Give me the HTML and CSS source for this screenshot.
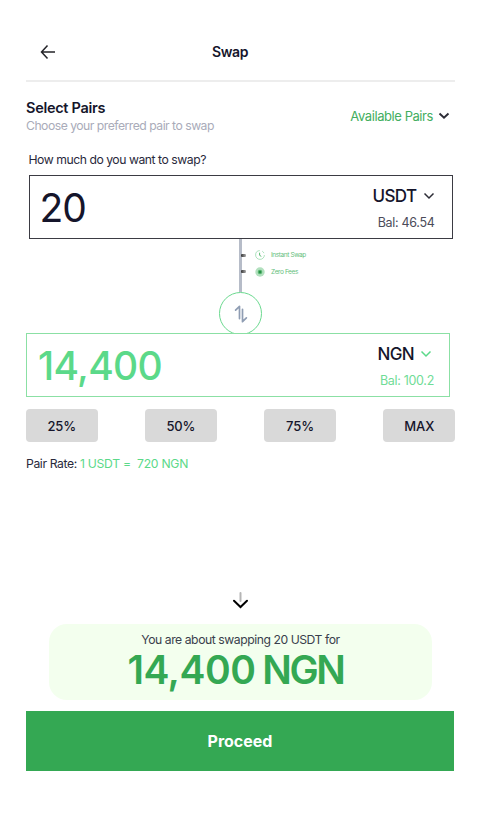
FILE: index.html
```html
<!DOCTYPE html>
<html lang="en">
<head>
<meta charset="utf-8">
<title>Swap</title>
<link rel="stylesheet" href="styles.css">
</head>
<body>
<main class="screen">
  <header class="header">
    <svg class="back" width="16" height="16" viewBox="0 0 16 16"><path d="M15 8H1.500M7.500 1.500L1.500 8l6 6.500"/></svg>
    <h1 class="title">Swap</h1>
  </header>

  <section class="pairs">
    <div>
      <h2 class="pairs-title">Select Pairs</h2>
      <p class="pairs-sub">Choose your preferred pair to swap</p>
    </div>
    <div class="available"><span class="available-text">Available Pairs</span>
      <svg class="chevron bold" width="12" height="8" viewBox="0 0 12 8"><path d="M1.500 1.500L6 5.800l4.500-4.300"/></svg>
    </div>
  </section>

  <p class="question">How much do you want to swap?</p>

  <section class="box from">
    <span class="amount">20</span>
    <div class="side">
      <div class="currency"><span class="code">USDT</span><svg class="chevron" width="12" height="8" viewBox="0 0 12 8"><path d="M1.500 1.500L6 6l4.500-4.500"/></svg></div>
      <span class="balance">Bal: 46.54</span>
    </div>
  </section>

  <section class="link">
    <div class="rail"></div>
    <ul class="perks">
      <li class="perk"><i class="tick"></i>
        <svg class="perk-icon" width="10" height="10" viewBox="0 0 10 10"><circle cx="5" cy="5" r="4.400" fill="none" stroke="#9bdcae" stroke-width=".8" stroke-dasharray="20 2.500 2.500 2.600"/><path d="M4.600 2.700V5.300L6.300 6.400" fill="none" stroke="#34a853" stroke-width=".8"/></svg>
        <span>Instant Swap</span></li>
      <li class="perk"><i class="tick"></i>
        <svg class="perk-icon" width="10" height="10" viewBox="0 0 10 10"><circle cx="5" cy="5" r="4.700" fill="#b2e0be"/><circle cx="5" cy="5" r="2.300" fill="#5dba75"/><path d="M5 3.500L6.500 5 5 6.500 3.500 5Z" fill="#238943"/></svg>
        <span>Zero Fees</span></li>
    </ul>
    <div class="swap">
      <svg width="14" height="18" viewBox="0 0 14 18"><path d="M1.600 5.200L5.500 1.300V13.600M8.500 4.300v12.400l3.900-3.900"/></svg>
    </div>
  </section>

  <section class="box to">
    <span class="amount">14,400</span>
    <div class="side">
      <div class="currency"><span class="code ngn">NGN</span><svg class="chevron" width="12" height="8" viewBox="0 0 12 8"><path d="M1.500 1.500L6 6l4.500-4.500"/></svg></div>
      <span class="balance">Bal: 100.2</span>
    </div>
  </section>

  <div class="percents">
    <button class="percent">25%</button>
    <button class="percent">50%</button>
    <button class="percent">75%</button>
    <button class="percent">MAX</button>
  </div>

  <p class="rate">Pair Rate: <span class="rate-value">1 USDT =&nbsp; 720 NGN</span></p>

  <svg class="down" width="17" height="19" viewBox="0 0 17 19"><path d="M8.500 2v8" stroke="#b5b5b5" stroke-width="2"/><path d="M2 9.800L8.500 16l6.500-6.200" stroke="#000" stroke-width="2"/></svg>

  <section class="summary">
    <p class="summary-text">You are about swapping 20 USDT for</p>
    <p class="summary-amount">14,400 <span class="unit">NGN</span></p>
  </section>

  <button class="proceed">Proceed</button>
</main>
</body>
</html>
```
FILE: styles.css
```css
* { box-sizing: border-box; }
body { margin: 0; background: #fff; color: #15152b; font-family: Inter, "Liberation Sans", sans-serif; }
h1, h2, p, ul { margin: 0; padding: 0; }
button { border: 0; padding: 0; font-family: inherit; color: inherit; }
svg { display: block; flex: none; }
.screen { width: 481px; height: 837px; padding: 24px 26px 0; overflow: hidden; display: flex; flex-direction: column; }
.header { height: 58px; flex: none; width: 429px; border-bottom: 2px solid #ededed; display: grid; grid-template-columns: 186px 57px 186px; align-items: center; }
.back { margin-left: 14px; fill: none; stroke: #242429; stroke-width: 1.5; }
.title { font-size: 14px; font-weight: 600; letter-spacing: -.4px; padding-bottom: 1px; }
.pairs { width: 429px; height: 54px; margin-top: 16px; flex: none; display: flex; justify-content: space-between; }
.pairs-title { font-size: 14.5px; font-weight: 600; line-height: 20px; letter-spacing: -.3px; }
.pairs-sub { font-size: 12.2px; line-height: 15px; color: #a9abb9; letter-spacing: -.5px; }
.available { display: flex; align-items: center; gap: 5px; height: 36px; padding-right: 5px; }
.available-text { font-size: 13px; color: #43ae60; letter-spacing: -.43px; }
.chevron { fill: none; stroke: #2c2c36; stroke-width: 1.5; }
.bold { stroke-width: 1.9; }
.question { font-size: 12.2px; line-height: 16px; padding-left: 2.5px; color: #29293b; letter-spacing: -.46px; }
.box { width: 424px; height: 64px; flex: none; display: flex; justify-content: space-between; padding: 0 17px 0 11px; border: 1px solid; background: #fff; }
.from { margin: 7px 0 0 2.5px; border-color: #3b3b43; }
.to { border-color: #8be0a4; color: #5bd989; position: relative; padding-right: 15px; margin-top: -.5px; }
.amount { font-size: 39px; line-height: 63px; font-weight: 500; letter-spacing: -.7px; }
.from .amount { font-weight: 400; letter-spacing: -1.1px; margin-left: -1px; line-height: 64px; }
.side { display: flex; flex-direction: column; align-items: flex-end; padding-top: 9px; }
.currency { display: flex; align-items: center; gap: 6px; height: 22px; color: #15152b; }
.code { font-size: 17px; font-weight: 500; letter-spacing: -.6px; }
.to .currency { padding-right: 2px; }
.to .chevron { stroke: #5bd989; }
.balance { font-size: 12.5px; line-height: 16px; margin-top: 8px; color: #4b4b59; letter-spacing: -.3px; }
.to .balance { color: #70dc96; }
.link { height: 94px; flex: none; display: grid; grid-template-columns: 193px 43px 1fr; grid-template-rows: 53px 41px; }
.rail { grid-column: 2; width: 3px; height: 53px; margin-left: 20px; background: #b6bcc8; }
.perks { grid-column: 3; list-style: none; padding-top: 8px; margin-left: -21px; }
.perk { display: flex; align-items: center; height: 16.5px; font-size: 6.5px; color: #65be7c; letter-spacing: -.4px; }
.tick { width: 5px; height: 3px; border-radius: 1px; background: linear-gradient(90deg, #333, #aaa); }
.perk-icon { margin: 0 6px 0 9px; }
.swap { grid-column: 2; grid-row: 2; width: 43px; height: 43px; border: 1px solid #6bd98f; border-radius: 50%; display: flex; align-items: center; justify-content: center; }
.swap svg { fill: none; stroke: #8f9db3; stroke-width: 1.7; stroke-linecap: round; stroke-linejoin: round; }
.percents { width: 429px; margin-top: 12.5px; display: flex; justify-content: space-between; }
.percent { width: 71.5px; height: 33px; border-radius: 4px; background: #d9d9d9; font-size: 13px; font-weight: 500; letter-spacing: -.1px; }
.rate { font-size: 12.2px; line-height: 16px; margin-top: 14px; color: #29293b; letter-spacing: -.38px; }
.rate-value { color: #5bd989; letter-spacing: -.28px; }
.down { margin: 119px 0 0 206px; fill: none; stroke-linecap: round; }
.summary { width: 383px; height: 76px; flex: none; margin: 14px 0 0 23px; border-radius: 18px; background: #f3ffee; text-align: center; padding-top: 8px; }
.summary-text { font-size: 12.2px; line-height: 15px; color: #39404c; letter-spacing: -.45px; }
.summary-amount { font-size: 39px; line-height: 45px; font-weight: 600; color: #34a853; letter-spacing: -.5px; word-spacing: -2.5px; margin-left: -10px; }
.unit { letter-spacing: -2.4px; }
.proceed { width: 428px; height: 60px; flex: none; margin-top: 11px; background: #34a853; color: #fff; font-size: 16px; font-weight: 700; }
```
